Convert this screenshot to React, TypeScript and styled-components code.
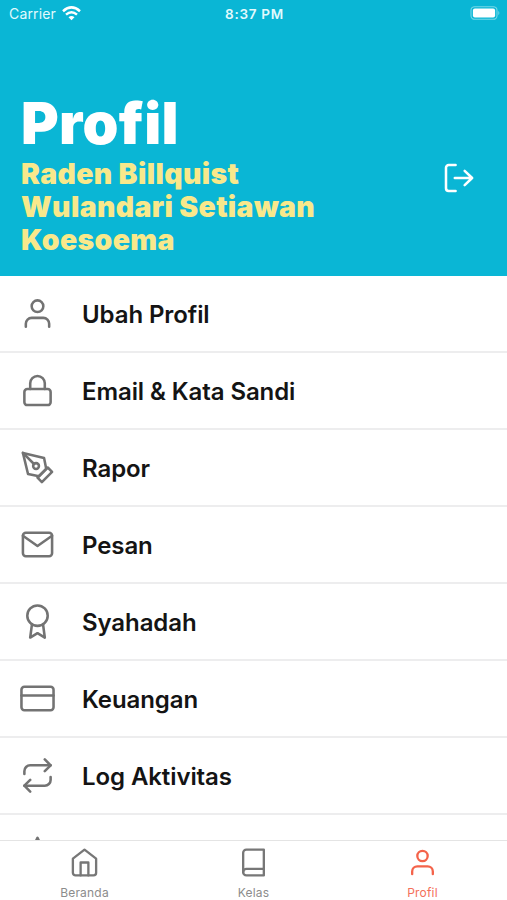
import React from 'react';
import styled, { createGlobalStyle } from 'styled-components';
import {
  FiAward, FiBook, FiCreditCard, FiHome, FiLock, FiMail, FiPenTool, FiRepeat, FiStar, FiUser,
} from 'react-icons/fi';

const GlobalStyle = createGlobalStyle`
  * { box-sizing: border-box; }
  body { margin: 0; background: #fff; font-family: Inter, "Liberation Sans", sans-serif; }
`;

const Screen = styled.div`
  display: flex;
  flex-direction: column;
  width: 507px;
  height: 900px;
  overflow: hidden;
  background: #fff;
`;

const Header = styled.header`
  flex: none;
  height: 276px;
  background: #0ab6d5;
  color: #fff;
`;

const StatusBar = styled.div`
  display: grid;
  grid-template-columns: 1fr auto 1fr;
  align-items: center;
  height: 27px;
  padding: 0 7px 0 9px;
  font-size: 14px;
  color: #e2fafd;
`;

const Carrier = styled.div`
  display: flex;
  align-items: center;
  gap: 6px;
  letter-spacing: 0.15px;
`;

const Clock = styled.div`
  font-size: 13.5px;
  font-weight: 600;
  letter-spacing: 0.7px;
`;

const Battery = styled.svg`
  justify-self: end;
  margin-top: -1px;
`;

const HeaderBody = styled.div`
  display: flex;
  justify-content: space-between;
  padding: 62px 33.5px 0 21px;
`;

const Title = styled.h1`
  margin: 0;
  font-size: 57.5px;
  line-height: 68px;
  font-weight: 900;
  letter-spacing: 0.3px;
`;

const Name = styled.p`
  width: 320px;
  margin: 0;
  font-size: 28.4px;
  line-height: 33px;
  font-weight: 900;
  letter-spacing: 0.37px;
  color: #f8e88b;
`;

const LogoutButton = styled.button`
  align-self: flex-start;
  display: flex;
  margin-top: 73px;
  padding: 0;
  border: 0;
  background: none;
  color: #fff;
`;

const Menu = styled.ul`
  flex: 1;
  min-height: 0;
  overflow: hidden;
  margin: 0;
  padding: 0;
  list-style: none;
`;

const MenuRow = styled.li`
  display: flex;
  align-items: center;
  gap: 27px;
  height: 77px;
  padding-left: 20px;
  border-bottom: 2px solid #ededee;
  color: #737373;
`;

const MenuLabel = styled.span`
  padding-top: 1px;
  font-size: 24px;
  font-weight: 600;
  letter-spacing: -0.09px;
  color: #141414;
`;

const TabBar = styled.nav`
  flex: none;
  display: grid;
  grid-template-columns: repeat(3, 1fr);
  height: 60px;
  border-top: 1px solid #e4e4e4;
  background: #fff;
`;

const Tab = styled.a<{ $active?: boolean }>`
  display: flex;
  flex-direction: column;
  align-items: center;
  padding-top: 6px;
  gap: 7px;
  color: ${(p) => (p.$active ? '#f4634a' : '#777')};
`;

const TabLabel = styled.span<{ $active?: boolean }>`
  font-size: 12px;
  line-height: 16px;
  letter-spacing: 0.2px;
  color: ${(p) => (p.$active ? '#f4705a' : '#8c8c8c')};
`;

const items = [
  { label: 'Ubah Profil', Icon: FiUser },
  { label: 'Email & Kata Sandi', Icon: FiLock },
  { label: 'Rapor', Icon: FiPenTool },
  { label: 'Pesan', Icon: FiMail },
  { label: 'Syahadah', Icon: FiAward },
  { label: 'Keuangan', Icon: FiCreditCard },
  { label: 'Log Aktivitas', Icon: FiRepeat },
  { label: '', Icon: FiStar },
];

const tabs = [
  { label: 'Beranda', Icon: FiHome },
  { label: 'Kelas', Icon: FiBook },
  { label: 'Profil', Icon: FiUser, active: true },
];

export default function App() {
  return (
    <>
      <GlobalStyle />
      <Screen>
        <Header>
          <StatusBar>
            <Carrier>
              Carrier
              <svg width="19" height="15" viewBox="0 0 19 15" fill="none" stroke="#fff" strokeWidth="2.5">
                <path d="M1 5.2Q9.5-2.4 18 5.2" />
                <path d="M4 8.6Q9.5 3.8 15 8.6" />
                <path d="M6.5 11.2Q9.5 8.6 12.5 11.2L9.5 14.3Z" fill="#fff" stroke="none" />
              </svg>
            </Carrier>
            <Clock>8:37 PM</Clock>
            <Battery width="30" height="14" viewBox="0 0 30 14">
              <rect x="1" y="0.7" width="26" height="12.6" rx="3.6" fill="none" stroke="#76d7e7" strokeWidth="1.1" />
              <rect x="2.9" y="2.6" width="22.2" height="8.8" rx="2" fill="#fff" />
              <path d="M28.3 5a2.4 2.4 0 0 1 0 4z" fill="#76d7e7" />
            </Battery>
          </StatusBar>
          <HeaderBody>
            <div>
              <Title>Profil</Title>
              <Name>Raden Billquist Wulandari Setiawan Koesoema</Name>
            </div>
            <LogoutButton aria-label="Keluar">
              <svg width="32" height="32" viewBox="0 0 24 24" fill="none" stroke="currentColor" strokeWidth="1.9" strokeLinecap="round" strokeLinejoin="round">
                <path d="M10.2 21.7H5a2 2 0 0 1-2-2V4.3a2 2 0 0 1 2-2h5.2" />
                <path d="M9.6 12h13M17 6.6l5.6 5.400-5.6 5.400" />
              </svg>
            </LogoutButton>
          </HeaderBody>
        </Header>
        <Menu>
          {items.map(({ label, Icon }) => (
            <MenuRow key={label}>
              <Icon size={35} strokeWidth={1.75} />
              <MenuLabel>{label}</MenuLabel>
            </MenuRow>
          ))}
        </Menu>
        <TabBar>
          {tabs.map(({ label, Icon, active }) => (
            <Tab key={label} $active={active}>
              <Icon size={31} strokeWidth={1.8} />
              <TabLabel $active={active}>{label}</TabLabel>
            </Tab>
          ))}
        </TabBar>
      </Screen>
    </>
  );
}
